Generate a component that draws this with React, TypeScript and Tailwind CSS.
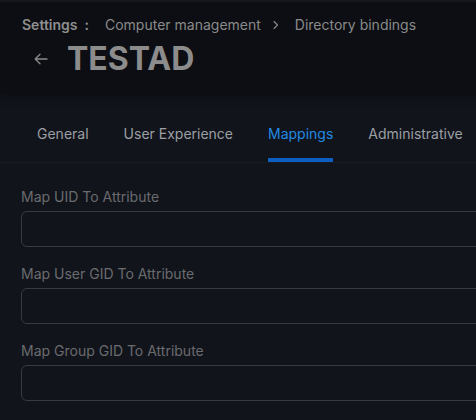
import React from "react";

const tabs = ["General", "User Experience", "Mappings", "Administrative"];
const fields = ["Map UID To Attribute", "Map User GID To Attribute", "Map Group GID To Attribute"];

export default function App() {
  return (
    <div
      className="w-[476px] h-[420px] overflow-hidden bg-[#11141b]"
      style={{ fontFamily: "Inter, 'Noto Sans', sans-serif" }}
    >
      <div className="w-[760px]">
        <div className="bg-[#0c0e13] border-t-2 border-[#15171c] pt-[13px] pb-[14px] pl-[22px] shadow-[0_4px_10px_rgba(0,0,0,0.35)]">
          <div className="flex items-center text-sm leading-5 text-[#8a8a8a]">
            <span className="font-semibold text-[#8f8f8f]">Settings</span>
            <span className="font-semibold text-[#8f8f8f] ml-[7px]">:</span>
            <span className="ml-[16px]">Computer management</span>
            <svg className="ml-[10px]" width="10" height="10" viewBox="0 0 10 10" fill="none">
              <path d="M3 1.5 L6.5 5 L3 8.5" stroke="#8a8a8a" strokeWidth="1.1" strokeLinecap="round" strokeLinejoin="round" />
            </svg>
            <span className="ml-[14px]">Directory bindings</span>
          </div>
          <div className="flex items-center mt-[4px] h-10">
            <svg className="ml-[12px]" width="14" height="12" viewBox="0 0 14 12" fill="none">
              <path d="M13 6 H1.5 M6 1.2 L1.2 6 L6 10.8" stroke="#8a8a8a" strokeWidth="1.3" strokeLinecap="round" strokeLinejoin="round" />
            </svg>
            <span className="ml-[19px] text-[32px] leading-10 font-bold text-[#8c8c8c]">TESTAD</span>
          </div>
        </div>
        <div className="mt-[14px] flex border-b border-[#181b22] pl-[21px]">
          {tabs.map((t) => {
            const active = t === "Mappings";
            return (
              <div key={t} className="px-4 mr-[3px] pt-[17px] flex flex-col">
                <span className={`text-sm leading-5 ${active ? "text-[#2289e3]" : "text-[#9c9fa4]"}`}>{t}</span>
                <div className={`mt-[14px] h-1 ${active ? "bg-[#0c5fc0]" : "bg-transparent"}`} />
              </div>
            );
          })}
        </div>
        <div className="pl-[21px] pt-[24px] flex flex-col gap-[17px]">
          {fields.map((f) => (
            <div key={f} className="flex flex-col">
              <span className="text-sm leading-5 text-[#6a6b6e]">{f}</span>
              <div className="mt-[4px] h-[36px] w-[640px] rounded-md border border-[#393a3d] bg-[#11141b]" />
            </div>
          ))}
        </div>
      </div>
    </div>
  );
}
